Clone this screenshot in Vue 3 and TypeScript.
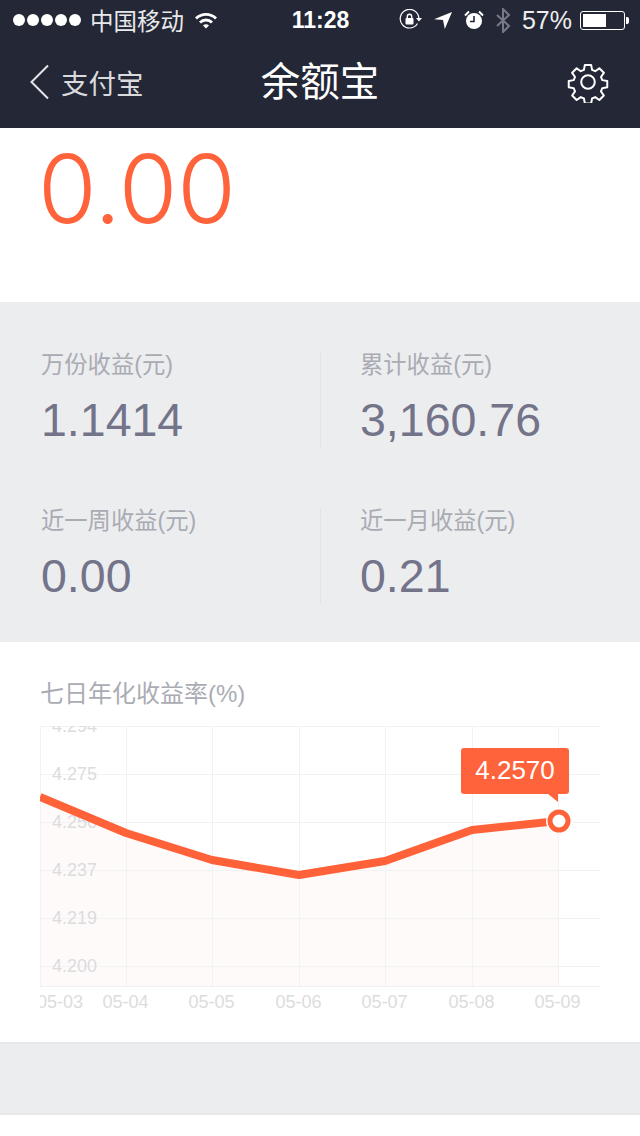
<script setup lang="ts">
const stats = [
  { label: '万份收益(元)', value: '1.1414' },
  { label: '累计收益(元)', value: '3,160.76' },
  { label: '近一周收益(元)', value: '0.00' },
  { label: '近一月收益(元)', value: '0.21' },
]

// chart coordinates, same pixels as the viewBox (0,0 is the top left of the plot)
const xs = [0, 86, 172, 259, 345, 432, 518]
const ys = [0, 48, 96, 144, 192, 240]
const points = [71, 107, 134, 149, 135, 104, 95]
const yLabels = [
  { y: 0, text: '4.294' },
  { y: 48, text: '4.275' },
  { y: 96, text: '4.256' },
  { y: 144, text: '4.237' },
  { y: 192, text: '4.219' },
  { y: 240, text: '4.200' },
]
const dates = ['05-03', '05-04', '05-05', '05-06', '05-07', '05-08', '05-09']
const linePath = xs.map((x, i) => `${i ? 'L' : 'M'}${x} ${points[i]}`).join(' ')
const areaPath = `${linePath} L518 260 L0 260 Z`
</script>

<template>
  <div class="page">
    <header class="top">
      <div class="status">
        <div class="status-left">
          <span class="dots"><i v-for="n in 5" :key="n" /></span>
          <span class="carrier">中国移动</span>
          <svg class="wifi" width="24" height="18" viewBox="0 0 24 18">
            <path d="M1 6.500a15.500 15.500 0 0 1 22 0l-2 2a12.700 12.700 0 0 0-18 0z" fill="#fff" />
            <path d="M5 10.500a9.900 9.900 0 0 1 14 0l-2 2a7 7 0 0 0-10 0z" fill="#fff" />
            <path d="M9 14.500a4.200 4.200 0 0 1 6 0l-3 3z" fill="#fff" />
          </svg>
        </div>
        <span class="time">11:28</span>
        <div class="status-right">
          <svg width="24" height="22" viewBox="0 0 24 22">
            <path d="M18.500 14.500A9.300 9.300 0 1 1 19.800 9" fill="none" stroke="#fff" stroke-width="1.200" />
            <path d="M17 9h6l-3 3.500z" fill="#fff" />
            <rect x="6.500" y="9" width="8" height="6.500" rx="1" fill="#fff" />
            <path d="M8.300 9V7.500a2.200 2.200 0 0 1 4.400 0V9" fill="none" stroke="#fff" stroke-width="1.400" />
          </svg>
          <svg class="ic-loc" width="18" height="18" viewBox="0 0 18 18">
            <path d="M18 1 10.800 18 9 9 0 8.200z" fill="#fff" />
          </svg>
          <svg class="ic-alarm" width="20" height="20" viewBox="0 0 20 20">
            <circle cx="10" cy="11" r="8" fill="#fff" />
            <path d="M10 6v5.500H6" fill="none" stroke="#232736" stroke-width="1.600" />
            <path d="M1 5.500 5 1.500M19 5.500l-4-4" stroke="#fff" stroke-width="2" />
          </svg>
          <svg class="ic-bt" width="16" height="25" viewBox="0 0 16 25">
            <path d="M2 7l12 11-6 6V1l6 6L2 18" fill="none" stroke="#777a86" stroke-width="2" />
          </svg>
          <span class="percent">57%</span>
          <span class="battery"><i /></span>
        </div>
      </div>
      <nav class="nav">
        <div class="back">
          <svg width="22" height="36" viewBox="0 0 22 36">
            <path d="M19 1.500 2.500 18 19 34.500" fill="none" stroke="#e4e5e8" stroke-width="2" />
          </svg>
          <span>支付宝</span>
        </div>
        <h1>余额宝</h1>
        <svg class="gear" width="42" height="42" viewBox="0 0 42 42">
          <path
            d="M17.500 2h7l1 5.500 3.500 1.500 4.600-3.200 5 5-3.200 4.600 1.500 3.500 5.500 1v7l-5.500 1-1.500 3.500 3.200 4.600-5 5-4.600-3.200-3.500 1.500-1 5.500h-7l-1-5.500-3.500-1.500-4.600 3.200-5-5 3.200-4.600-1.500-3.500-5.500-1v-7l5.500-1 1.500-3.500-3.200-4.600 5-5 4.600 3.200 3.500-1.500z"
            transform="translate(2.100 2.100) scale(0.9)"
            fill="none"
            stroke="#fff"
            stroke-width="2.200"
            stroke-linejoin="round"
          />
          <circle cx="21" cy="21" r="6.800" fill="none" stroke="#fff" stroke-width="2" />
        </svg>
      </nav>
    </header>

    <section class="balance">0.00</section>

    <section class="stats">
      <div v-for="s in stats" :key="s.label" class="stat">
        <div class="stat-label">{{ s.label }}</div>
        <div class="stat-value">{{ s.value }}</div>
      </div>
    </section>

    <section class="chart-card">
      <h2>七日年化收益率(%)</h2>
      <div class="chart">
        <svg width="560" height="288" viewBox="0 0 560 288">
          <path :d="areaPath" fill="#fefafa" />
          <line x1="0" y1="260.500" x2="560" y2="260.500" stroke="#f0f0f1" />
          <line v-for="y in ys" :key="y" x1="0" :y1="y + 0.500" x2="560" :y2="y + 0.500" stroke="#f2f2f3" />
          <line v-for="x in xs" :key="x" :x1="x + 0.500" y1="0" :x2="x + 0.500" y2="260" stroke="#f2f2f3" />
          <text v-for="l in yLabels" :key="l.text" x="12" :y="l.y + 6" class="axis">{{ l.text }}</text>
          <text
            v-for="(d, i) in dates"
            :key="d"
            :x="i === 0 ? 20 : xs[i] - 0.500"
            y="282"
            text-anchor="middle"
            class="axis"
          >{{ d }}</text>
          <path :d="linePath" fill="none" stroke="#ff6138" stroke-width="8" stroke-linejoin="round" />
          <circle cx="519" cy="95" r="13" fill="#fff" />
          <circle cx="519" cy="95" r="9" fill="#fff" stroke="#ff6138" stroke-width="5" />
        </svg>
        <div class="tip">4.2570</div>
      </div>
    </section>

    <section class="spacer" />
  </div>
</template>

<style scoped>
.page {
  width: 640px;
  height: 1136px;
  overflow: hidden;
  display: flex;
  flex-direction: column;
  background: #fff;
  font-family: "Liberation Sans", "Noto Sans CJK SC", sans-serif;
}

.top {
  height: 128px;
  flex-shrink: 0;
  background: #232736;
  color: #fff;
}

.status {
  height: 40px;
  display: grid;
  grid-template-columns: 1fr auto 1fr;
  align-items: center;
  padding: 0 9px 0 13px;
}

.status-left {
  display: flex;
  align-items: center;
}

.dots {
  display: flex;
  gap: 2px;
  margin-right: 9px;
}

.dots i {
  width: 12px;
  height: 12px;
  border-radius: 50%;
  background: #fff;
}

.carrier {
  font-size: 23.500px;
  color: #e8e9eb;
}

.wifi {
  margin-left: 10px;
}

.time {
  font-size: 23px;
  font-weight: 700;
  margin-left: -3px;
}

.status-right {
  display: flex;
  align-items: center;
  justify-content: flex-end;
}

.ic-loc {
  margin-left: 11px;
}

.ic-alarm {
  margin-left: 12px;
}

.ic-bt {
  margin-left: 11px;
}

.percent {
  margin-left: 11px;
  font-size: 25px;
  color: #eee;
}

.battery {
  position: relative;
  width: 45px;
  height: 19px;
  margin: 0 6px 0 8px;
  padding: 2px;
  box-sizing: border-box;
  border: 1px solid #fff;
  border-radius: 3px;
}

.battery::after {
  content: "";
  position: absolute;
  right: -5px;
  top: 5px;
  width: 3px;
  height: 7px;
  background: #fff;
  border-radius: 0 2px 2px 0;
}

.battery i {
  display: block;
  width: 23px;
  height: 100%;
  background: #fff;
}

.nav {
  height: 88px;
  box-sizing: border-box;
  padding: 0 31px 0 29px;
  display: grid;
  grid-template-columns: 1fr auto 1fr;
  align-items: center;
}

.back {
  display: flex;
  align-items: center;
  gap: 10px;
  color: #d9dadd;
  font-size: 27.500px;
  margin-top: -4px;
}

.nav h1 {
  margin: -12px 0 0 2px;
  font-size: 39.500px;
  font-weight: 400;
  color: #fff;
}

.gear {
  justify-self: end;
  margin-top: -4px;
}

.balance {
  height: 174px;
  flex-shrink: 0;
  box-sizing: border-box;
  padding: 0 0 0 38px;
  font-family: Inter, "Liberation Sans", sans-serif;
  font-weight: 300;
  font-size: 95px;
  line-height: 122px;
  color: #ff633c;
}

.stats {
  height: 340px;
  flex-shrink: 0;
  box-sizing: border-box;
  padding: 40px 0 0;
  background: #ecedef;
  display: grid;
  grid-template-columns: 320px 320px;
  grid-auto-rows: 156px;
}

.stat {
  position: relative;
  padding-left: 41px;
}

.stat:nth-child(even) {
  padding-left: 40px;
}

.stat:nth-child(even)::before {
  content: "";
  position: absolute;
  left: 0;
  top: 10px;
  height: 96px;
  width: 1px;
  background: #e2e3e5;
}

.stat-label {
  font-size: 23.300px;
  line-height: 46px;
  color: #a9abb3;
}

.stat-value {
  font-size: 46.500px;
  line-height: 64px;
  color: #73738a;
}

.chart-card {
  height: 400px;
  flex-shrink: 0;
  box-sizing: border-box;
  padding: 44px 40px 0;
}

.chart-card h2 {
  margin: 0 0 24px;
  font-size: 24px;
  line-height: 16px;
  font-weight: 400;
  color: #aaacb4;
}

.chart {
  position: relative;
  height: 288px;
}

.chart svg {
  display: block;
}

.axis {
  font-size: 18px;
  fill: #dcdcde;
}

.tip {
  position: absolute;
  left: 421px;
  top: 22px;
  width: 108px;
  height: 46px;
  background: #ff633c;
  border-radius: 3px;
  color: #fff;
  font-size: 26px;
  line-height: 44px;
  text-align: center;
}

.tip::after {
  content: "";
  position: absolute;
  right: 11px;
  bottom: -8px;
  border-top: 8px solid #ff633c;
  border-left: 10px solid transparent;
}

.spacer {
  height: 73px;
  flex-shrink: 0;
  box-sizing: border-box;
  background: #ecedef;
  border-top: 2px solid #e7e8ea;
  border-bottom: 2px solid #e7e8ea;
}
</style>
